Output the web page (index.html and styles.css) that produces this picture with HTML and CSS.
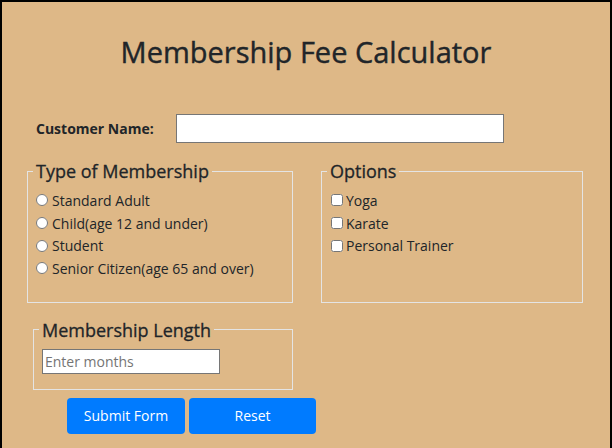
FILE: index.html
```html
<!DOCTYPE html>
<html lang="en">
<head>
<meta charset="utf-8">
<title>Membership Fee Calculator</title>
<link rel="stylesheet" href="styles.css">
</head>
<body>
<div class="page">
  <h1 class="title">Membership Fee Calculator</h1>
  <form class="form" onsubmit="return false">
    <div class="name-row">
      <label class="name-label" for="cname">Customer Name:</label>
      <input class="name-input" id="cname" type="text">
    </div>
    <div class="groups">
      <fieldset class="group group-type">
        <legend class="legend">Type of Membership</legend>
        <label class="opt"><input class="radio" type="radio" name="mtype">Standard Adult</label>
        <label class="opt"><input class="radio" type="radio" name="mtype">Child(age 12 and under)</label>
        <label class="opt"><input class="radio" type="radio" name="mtype">Student</label>
        <label class="opt"><input class="radio" type="radio" name="mtype">Senior Citizen(age 65 and over)</label>
      </fieldset>
      <fieldset class="group group-options">
        <legend class="legend">Options</legend>
        <label class="opt"><input class="check" type="checkbox">Yoga</label>
        <label class="opt"><input class="check" type="checkbox">Karate</label>
        <label class="opt"><input class="check" type="checkbox">Personal Trainer</label>
      </fieldset>
    </div>
    <fieldset class="group group-length">
      <legend class="legend">Membership Length</legend>
      <input class="months" type="text" placeholder="Enter months">
    </fieldset>
    <div class="buttons">
      <button class="btn btn-submit" type="submit">Submit Form</button>
      <button class="btn btn-reset" type="reset">Reset</button>
    </div>
  </form>
</div>
</body>
</html>
```
FILE: styles.css
```css
html, body {
  margin: 0;
  padding: 0;
  background: #ffffff;
}

.page {
  box-sizing: border-box;
  width: 612px;
  min-height: 460px;
  border: 2px solid #000;
  border-bottom: none;
  background: #deb887;
  color: #212529;
  font-family: "Open Sans", "Noto Sans", sans-serif;
  font-size: 14px;
}

.title {
  margin: 0;
  padding-top: 32px;
  text-align: center;
  font-size: 29px;
  font-weight: 400;
  line-height: 36px;
  -webkit-text-stroke: 0.4px #212529;
}

.form {
  margin: 0;
}

.name-row {
  display: flex;
  align-items: center;
  margin-top: 44px;
  padding-left: 34px;
}

.name-label {
  width: 140px;
  font-weight: 700;
  font-size: 14px;
}

.name-input {
  box-sizing: border-box;
  width: 328px;
  height: 29px;
  margin: 0;
  border: 1px solid #767676;
  background: #fff;
}

.groups {
  display: flex;
  margin-top: 16px;
  padding-left: 25px;
  gap: 28px;
}

.group {
  box-sizing: border-box;
  margin: 0;
  border: 1px solid #e4e4e4;
  padding: 6px 8px 22px 8px;
}

.group-type {
  width: 266px;
}

.group-options {
  width: 262px;
}

.legend {
  padding: 0 3px;
  margin-left: -3px;
  font-size: 18px;
  font-weight: 400;
  line-height: 24px;
  color: #212529;
  -webkit-text-stroke: 0.3px #212529;
}

.opt {
  display: flex;
  align-items: center;
  height: 22.7px;
  font-size: 14px;
  color: #212529;
}

.radio {
  width: 12px;
  height: 12px;
  margin: 0 4px 0 0;
}

.check {
  width: 12px;
  height: 12px;
  margin: 0 3px 0 1px;
}

.group-length {
  width: 260px;
  margin: 15px 0 0 31px;
  padding: 7px 8px 15px 8px;
}

.months {
  box-sizing: border-box;
  width: 178px;
  height: 25px;
  margin: 0;
  padding: 0 2px;
  border: 1px solid #767676;
  background: #fff;
  font-family: "Open Sans", sans-serif;
  font-size: 14px;
}

.months::placeholder {
  color: #757575;
}

.buttons {
  display: flex;
  gap: 4px;
  margin-top: 8px;
  padding-left: 65px;
}

.btn {
  height: 36px;
  border: none;
  border-radius: 4px;
  background: #007bff;
  color: #fff;
  font-family: "Open Sans", sans-serif;
  font-size: 14px;
  padding: 0;
}

.btn-submit {
  width: 118px;
}

.btn-reset {
  width: 127px;
}
```
